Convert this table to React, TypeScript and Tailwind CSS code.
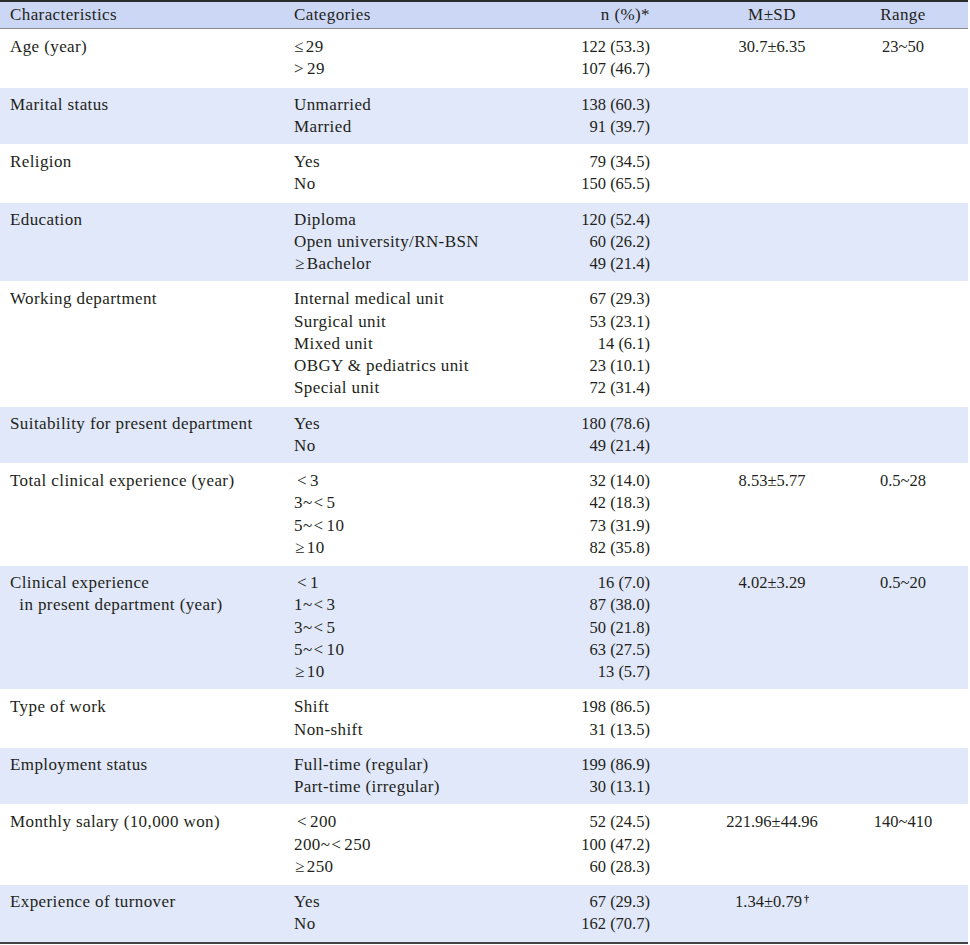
import React from 'react';

interface Row {
  label: string[];
  cats: React.ReactNode[];
  counts: string[];
  msd?: React.ReactNode;
  range?: string;
}

const lt = (n: string) => (
  <span>
    <span className="ml-[3px] mr-[3px]">&lt;</span>
    {n}
  </span>
);
const tlt = (a: string, b: string) => (
  <span>
    {a}~<span className="ml-[1px] mr-[3px]">&lt;</span>
    {b}
  </span>
);
const ge = (n: string) => (
  <span>
    <span className="ml-[1px] mr-[2px]">≥</span>
    {n}
  </span>
);

const rows: Row[] = [
  {
    label: ['Age (year)'],
    cats: [
      <span>
        <span className="mr-[2px]">≤</span>29
      </span>,
      <span>
        <span className="mr-[3px]">&gt;</span>29
      </span>,
    ],
    counts: ['122 (53.3)', '107 (46.7)'],
    msd: '30.7±6.35',
    range: '23~50',
  },
  { label: ['Marital status'], cats: ['Unmarried', 'Married'], counts: ['138 (60.3)', '91 (39.7)'] },
  { label: ['Religion'], cats: ['Yes', 'No'], counts: ['79 (34.5)', '150 (65.5)'] },
  {
    label: ['Education'],
    cats: ['Diploma', 'Open university/RN-BSN', ge('Bachelor')],
    counts: ['120 (52.4)', '60 (26.2)', '49 (21.4)'],
  },
  {
    label: ['Working department'],
    cats: ['Internal medical unit', 'Surgical unit', 'Mixed unit', 'OBGY & pediatrics unit', 'Special unit'],
    counts: ['67 (29.3)', '53 (23.1)', '14 (6.1)', '23 (10.1)', '72 (31.4)'],
  },
  { label: ['Suitability for present department'], cats: ['Yes', 'No'], counts: ['180 (78.6)', '49 (21.4)'] },
  {
    label: ['Total clinical experience (year)'],
    cats: [lt('3'), tlt('3', '5'), tlt('5', '10'), ge('10')],
    counts: ['32 (14.0)', '42 (18.3)', '73 (31.9)', '82 (35.8)'],
    msd: '8.53±5.77',
    range: '0.5~28',
  },
  {
    label: ['Clinical experience', '\u00a0\u00a0in present department (year)'],
    cats: [lt('1'), tlt('1', '3'), tlt('3', '5'), tlt('5', '10'), ge('10')],
    counts: ['16 (7.0)', '87 (38.0)', '50 (21.8)', '63 (27.5)', '13 (5.7)'],
    msd: '4.02±3.29',
    range: '0.5~20',
  },
  { label: ['Type of work'], cats: ['Shift', 'Non-shift'], counts: ['198 (86.5)', '31 (13.5)'] },
  {
    label: ['Employment status'],
    cats: ['Full-time (regular)', 'Part-time (irregular)'],
    counts: ['199 (86.9)', '30 (13.1)'],
  },
  {
    label: ['Monthly salary (10,000 won)'],
    cats: [lt('200'), tlt('200', '250'), ge('250')],
    counts: ['52 (24.5)', '100 (47.2)', '60 (28.3)'],
    msd: '221.96±44.96',
    range: '140~410',
  },
  {
    label: ['Experience of turnover'],
    cats: ['Yes', 'No'],
    counts: ['67 (29.3)', '162 (70.7)'],
    msd: (
      <span>
        1.34±0.79<sup className="ml-[2px] text-[10px] font-bold">†</sup>
      </span>
    ),
  },
];

const cols = 'grid grid-cols-[284px_256px_110px_188px_130px]';
// text columns run a little wider than the figures, as in the source typeface
const txt = 'text-[17px] tracking-[0.4px]';
const num = 'text-[16.5px]';

export default function App() {
  return (
    <div className="bg-white w-[970px] min-h-[945px] text-[#231f20] font-['Liberation_Serif',serif]">
      <div className="w-[968px] border-t-2 border-[#2b2b2b] border-b-2 border-b-[#444]">
        <div className={`${cols} bg-[#ccd7f5] h-[27px] items-center border-b border-[#8c8c8c] leading-[22px]`}>
          <div className={`pl-[10px] ${txt}`}>Characteristics</div>
          <div className={`pl-[10px] ${txt}`}>Categories</div>
          <div className={`text-right ${txt}`}>n (%)*</div>
          <div className={`pl-[56px] text-center ${txt}`}>M±SD</div>
          <div className={`text-center ${txt}`}>Range</div>
        </div>
        {rows.map((r, i) => (
          <div
            key={i}
            className={`${cols} mt-[1px] pt-[6px] pb-[6px] leading-[22.25px] ${i % 2 === 1 ? 'bg-[#e1e8f9]' : 'bg-white'}`}
          >
            <div className={`pl-[10px] ${txt}`}>
              {r.label.map((l, j) => (
                <div key={j} className="whitespace-pre">{l}</div>
              ))}
            </div>
            <div className={`pl-[10px] ${txt}`}>
              {r.cats.map((c, j) => (
                <div key={j}>{c}</div>
              ))}
            </div>
            <div className={`text-right ${num}`}>
              {r.counts.map((c, j) => (
                <div key={j}>{c}</div>
              ))}
            </div>
            <div className={`pl-[56px] text-center ${num}`}>{r.msd}</div>
            <div className={`text-center ${num}`}>{r.range}</div>
          </div>
        ))}
      </div>
    </div>
  );
}
